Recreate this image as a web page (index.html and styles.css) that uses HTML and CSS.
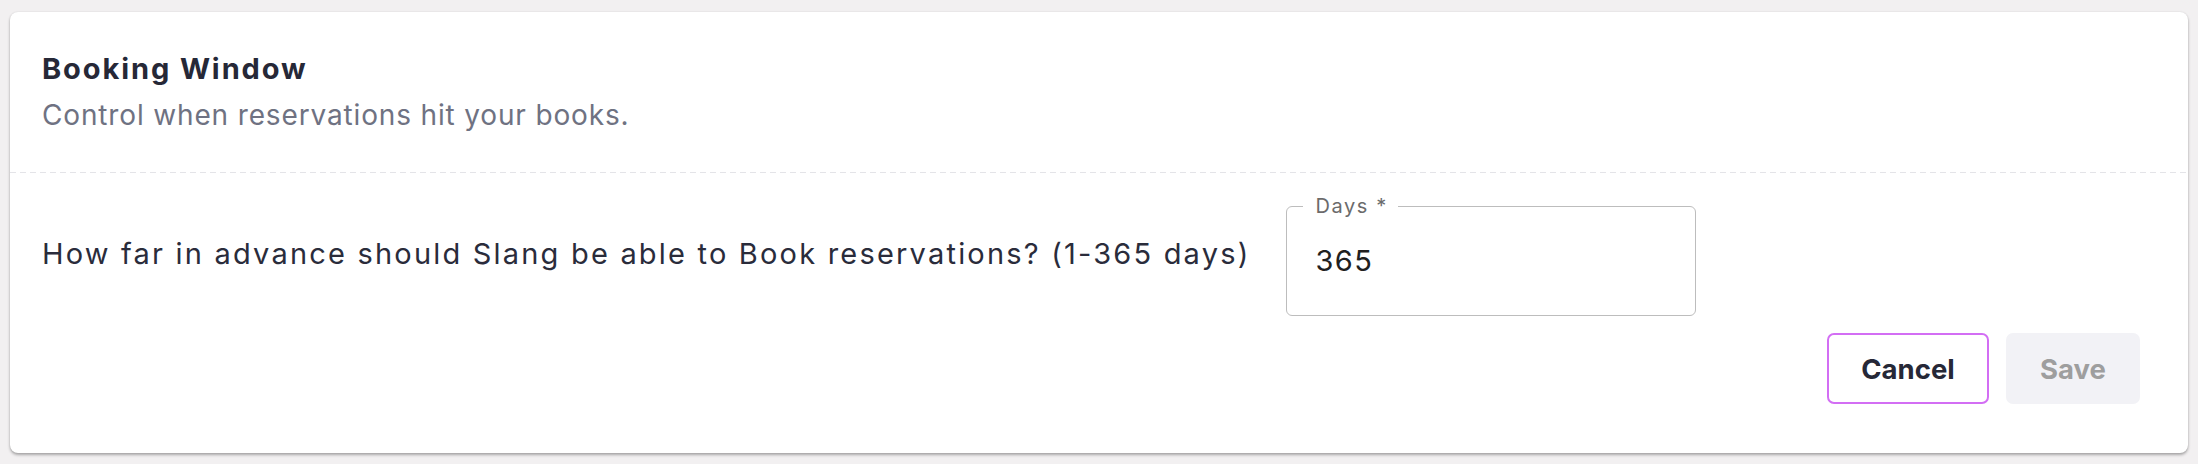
FILE: index.html
```html
<!DOCTYPE html>
<html lang="en">
<head>
<meta charset="utf-8">
<title>Booking Window</title>
<link rel="stylesheet" href="styles.css">
</head>
<body>
  <section class="card">
    <header class="card-header">
      <h2 class="title">Booking Window</h2>
      <p class="subtitle">Control when reservations hit your books.</p>
    </header>
    <div class="divider"></div>
    <div class="card-body">
      <div class="row">
        <p class="question">How far in advance should Slang be able to Book reservations? (1-365 days)</p>
        <div class="field">
          <label class="field-label" for="days">Days *</label>
          <input class="field-input" id="days" type="text" value="365">
        </div>
      </div>
      <div class="actions">
        <button class="btn btn-cancel" type="button">Cancel</button>
        <button class="btn btn-save" type="button" disabled>Save</button>
      </div>
    </div>
  </section>
</body>
</html>
```

FILE: styles.css
```css
* { box-sizing: border-box; }

html, body {
  margin: 0;
  height: 100%;
}

body {
  background: #f2f0f1;
  padding: 12px 10px 0 10px;
  font-family: Inter, "Liberation Sans", sans-serif;
  color: #272938;
}

.card {
  background: #ffffff;
  border-radius: 8px;
  box-shadow: 0 2px 3px rgba(0, 0, 0, 0.3), 0 0 2px rgba(0, 0, 0, 0.1);
}

.card-header {
  padding: 39px 32px 39px 32px;
}

.title {
  margin: 0;
  font-size: 29px;
  line-height: 36px;
  font-weight: 700;
  color: #262837;
  letter-spacing: 1.9px;
}

.subtitle {
  margin: 10px 0 0 0;
  font-size: 28px;
  line-height: 36px;
  font-weight: 400;
  color: #6f7282;
  letter-spacing: 0.85px;
}

.divider {
  height: 1px;
  background-image: repeating-linear-gradient(90deg, #e4e4e8 0 6px, transparent 6px 10px);
}

.card-body {
  padding: 33px 48px 49px 32px;
}

.row {
  display: flex;
  align-items: flex-start;
  gap: 36px;
}

.question {
  margin: 30px 0 0 0;
  font-size: 29px;
  line-height: 36px;
  color: #2a2c3b;
  letter-spacing: 2.2px;
}

.field {
  position: relative;
  width: 410px;
  height: 110px;
  border: 1.5px solid #bdbdbd;
  border-radius: 6px;
  display: flex;
  align-items: center;
  padding: 0 0 0 28px;
}

.field-label {
  position: absolute;
  top: -11px;
  left: 16px;
  padding: 0 10px 0 12px;
  background: #ffffff;
  font-size: 20px;
  line-height: 20px;
  color: #6b6b6b;
  letter-spacing: 1.6px;
}

.field-input {
  border: none;
  outline: none;
  background: transparent;
  padding: 0;
  margin: 0;
  width: 100%;
  font-family: Inter, "Liberation Sans", sans-serif;
  font-size: 29px;
  line-height: 36px;
  height: 36px;
  color: #202020;
  letter-spacing: 1.5px;
}

.actions {
  display: flex;
  justify-content: flex-end;
  gap: 17px;
  margin-top: 17px;
}

.btn {
  height: 71px;
  border-radius: 7px;
  font-family: Inter, "Liberation Sans", sans-serif;
  font-size: 27.5px;
  font-weight: 700;
  padding: 0;
  cursor: pointer;
}

.btn-cancel {
  width: 162px;
  background: #ffffff;
  border: 2px solid #d36ef4;
  color: #262837;
}

.btn-save {
  width: 134px;
  background: #f2f2f6;
  border: none;
  color: #9e9e9e;
}
```
